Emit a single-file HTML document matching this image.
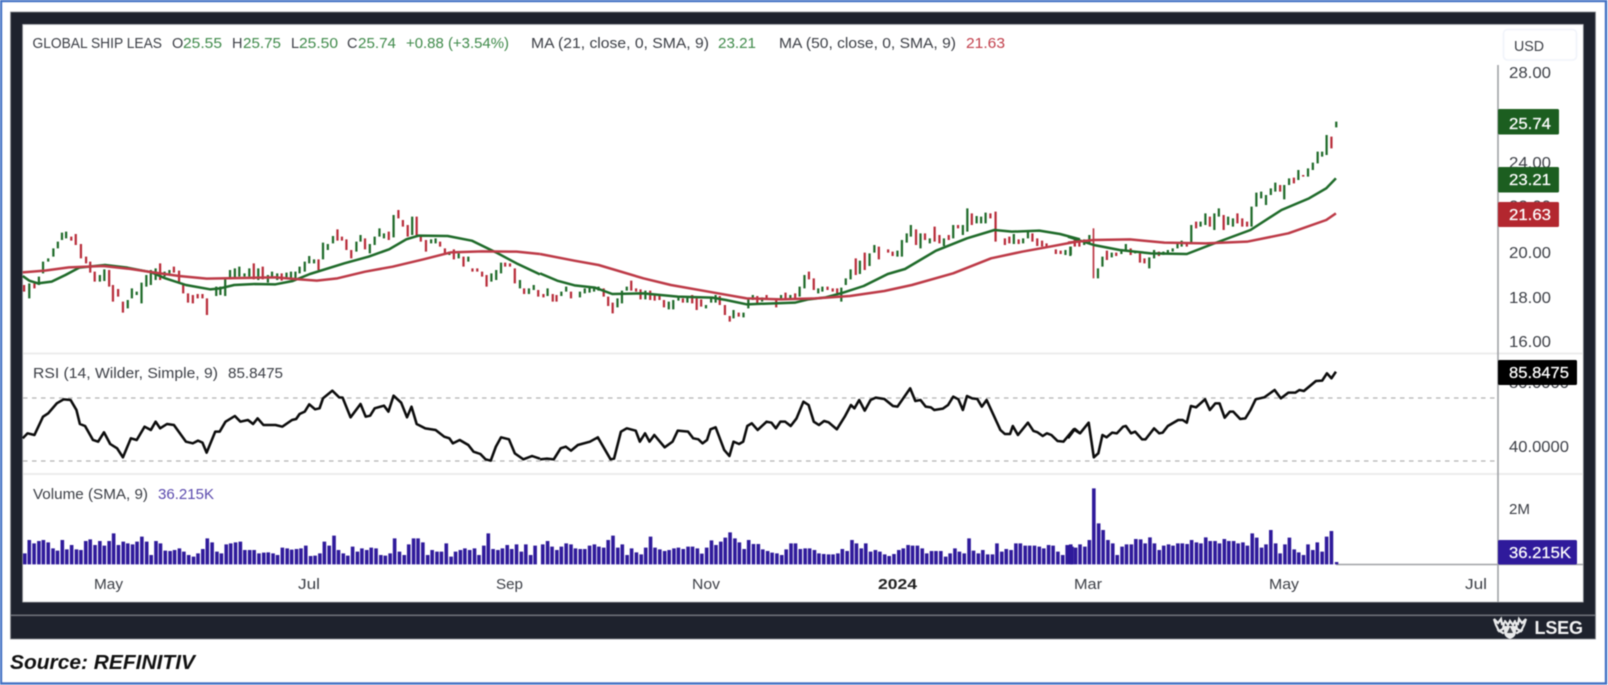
<!DOCTYPE html>
<html><head><meta charset="utf-8"><style>
html,body{margin:0;padding:0;background:#fff}
svg{display:block}
text{font-family:"Liberation Sans",sans-serif;fill:#3c3f46}
.g{fill:#3f8a4a}.r{fill:#c2404c}.w{fill:#fff;stroke:#fff;stroke-width:.25}
polyline{stroke-linejoin:round}
</style></head><body>
<svg width="1608" height="685" viewBox="0 0 1608 685" xmlns="http://www.w3.org/2000/svg" style="filter:blur(.4px)">
<rect x="1" y="1" width="1605" height="682.5" fill="#fff" stroke="#4472c4" stroke-width="2.4"/>
<rect x="10.5" y="12" width="1585" height="627" fill="#1e222d" stroke="#8a8d93" stroke-width=".8"/>
<rect x="22.7" y="24.5" width="1560.5" height="577.5" fill="#fff" stroke="#b5b7bb" stroke-width=".8"/>
<rect x="10.5" y="614.5" width="1585" height="1.6" fill="#6d7078"/>

<!-- separators -->
<rect x="23" y="352.5" width="1560" height="2" fill="#ececec"/>
<rect x="23" y="473" width="1560" height="2" fill="#ececec"/>
<path d="M23 398H1495M23 461H1495" stroke="#b4b4b4" stroke-width="1.2" stroke-dasharray="4.5 4.5" fill="none"/>
<path d="M1498 65V602" stroke="#a0a2a6" stroke-width="1.6"/>
<path d="M1336 564.5H1583" stroke="#a0a2a6" stroke-width="1.4"/>

<!-- USD -->
<rect x="1503.5" y="29.5" width="73" height="30.5" rx="4" fill="#fff" stroke="#f0f3fa" stroke-width="1.6"/>

<!-- candles zoom4 -->
<g transform="translate(0,220) scale(.34435,.33333)" fill="none" stroke-width="6.5">
<path stroke="#1f6b2a" d="M85 190V235M113 170V195M125 125V160M140 115V125M155 85V110M168 65V85M180 38V60M192 35V55M290 165V185M303 148V183M371 240V265M383 205V235M397 215V225M411 188V250M425 165V200M438 150V195M452 145V180M478 155V170M492 150V160M628 200V228M640 200V225M654 175V228M668 150V178M682 145V175M695 140V170M710 160V170M724 145V170M750 145V180M778 165V188M790 155V175M805 160V180M832 158V175M845 155V178M858 155V175M870 140V160M885 125V155M898 108V130M912 118V130M938 68V118M952 72V90M967 48V70M1035 65V95M1047 45V65M1074 72V100M1088 50V75M1102 25V50M1115 40V55M1143 -15V52M1197 -10V45M1252 58V70M1265 55V70M1305 95V105M1332 100V115M1360 110V125M1427 160V185M1441 150V180M1455 128V160M1510 180V205M1536 205V222M1550 195V210"/>
<path stroke="#b82c3a" d="M70 195V215M100 190V205M207 50V62M220 42V75M235 72V115M250 110V130M262 125V158M275 155V185M317 150V200M328 195V245M343 207V230M357 245V278M465 130V180M505 140V158M520 152V190M532 190V220M546 220V248M560 225V250M574 222V235M588 222V235M601 235V285M737 130V178M763 140V178M818 160V182M925 118V150M980 28V62M993 50V62M1006 58V90M1020 90V115M1060 55V88M1129 35V60M1157 -30V-5M1170 0V20M1184 15V50M1210 -10V50M1222 45V65M1237 60V95M1278 65V80M1292 85V100M1318 88V118M1346 110V140M1372 145V155M1386 145V155M1400 155V170M1413 165V200M1467 128V140M1481 130V140M1495 145V190M1522 205V222M1563 210V230"/>
<polyline fill="none" stroke="#1f6b2a" stroke-width="7.5" points="66,168 85,182 110,190 150,185 190,165 230,143 305,135 370,143 440,157 480,175 540,195 610,208 640,205 680,195 740,192 800,193 850,183 900,162 1000,130 1070,110 1130,88 1180,58 1215,47 1300,48 1370,62 1440,97 1500,130 1568,163"/>
<polyline fill="none" stroke="#bd3a47" stroke-width="7.5" points="66,157 130,152 200,142 300,138 380,147 450,158 520,168 600,176 700,174 800,172 870,178 920,182 980,175 1060,155 1140,140 1230,118 1310,97 1400,94 1500,95 1568,102"/>
<polyline fill="none" stroke="#0c0c0c" stroke-width="7.5" points="66,655 80,640 100,645 125,590 140,580 165,550 185,538 205,540 222,570 232,612 247,618 270,660 285,665 302,637 320,672 340,685 357,712 380,655 397,660 420,620 438,630 452,605 465,625 485,612 505,615 540,665 560,670 575,662 588,668 600,698 625,635 638,635 655,605 682,588 698,605 720,600 735,612 748,595 765,615 800,615 820,620 848,600 860,597 870,582 885,575 898,553 915,568 928,565 938,535 965,512 985,532 995,533 1018,592 1047,552 1062,590 1075,587 1088,565 1115,557 1128,575 1143,527 1165,548 1182,592 1195,560 1210,612 1235,625 1265,630 1290,650 1305,655 1315,670 1335,660 1360,675 1375,695 1395,702 1410,718 1425,722 1440,680 1455,652 1478,658 1495,700 1520,718 1545,708 1568,716"/>
</g>

<!-- candles zoom5 -->
<g transform="translate(540,220) scale(.34435,.33333)" fill="none" stroke-width="6.5">
<path stroke="#1f6b2a" d="M22 205V228M62 215V228M76 200V215M116 215V232M130 205V220M144 200V218M157 200V215M170 200V212M225 235V262M238 212V250M252 200V212M306 212V238M374 245V268M387 240V268M402 230V242M428 232V248M482 255V265M497 232V248M510 225V248M562 270V295M591 278V292M605 238V265M618 225V240M645 232V245M700 225V240M727 225V238M754 200V230M768 165V205M808 205V220M820 200V215M875 203V245M888 175V195M902 148V178M929 122V162M957 100V138M971 75V98M1038 92V110M1051 60V110M1065 40V68M1077 15V50M1105 40V85M1132 55V70M1173 55V78M1200 15V55M1228 15V45M1241 -35V35M1268 -12V10M1281 -10V10M1294 -22V10M1376 42V72M1403 55V70M1417 35V55M1526 90V105M1540 80V108"/>
<path stroke="#b82c3a" d="M10 222V232M37 222V245M48 225V245M90 215V235M185 205V230M198 230V258M211 248V280M265 182V212M279 205V215M292 208V238M320 212V240M333 225V242M347 228V240M360 240V262M415 235V248M442 225V250M455 235V270M468 238V260M522 228V255M537 255V285M551 288V305M577 278V290M631 228V255M658 225V238M686 240V262M713 218V240M741 220V235M781 155V178M795 175V210M835 200V210M850 205V215M863 205V220M917 115V165M943 98V150M984 80V118M1011 88V98M1024 95V108M1092 28V75M1118 40V60M1146 20V65M1160 45V70M1187 45V60M1214 15V25M1254 -20V15M1308 -20V-5M1323 -25V65M1350 55V75M1363 50V70M1390 58V72M1430 40V65M1444 55V78M1458 62V80M1471 70V82M1498 88V102M1512 92V102M1553 60V80"/>
<polyline fill="none" stroke="#1f6b2a" stroke-width="7.5" points="0,160 50,182 100,196 160,203 210,222 300,220 400,230 500,233 540,240 600,253 680,250 740,248 780,238 830,232 880,218 940,198 1010,162 1060,147 1150,92 1240,55 1320,30 1370,35 1450,32 1510,42 1568,58"/>
<polyline fill="none" stroke="#bd3a47" stroke-width="7.5" points="0,102 100,122 170,135 300,175 380,195 500,217 600,235 700,238 800,235 900,228 1000,213 1080,195 1200,160 1310,115 1400,95 1480,80 1568,63"/>
<polyline fill="none" stroke="#0c0c0c" stroke-width="7.5" points="0,718 20,716 40,718 60,685 75,680 90,692 110,675 145,665 168,652 205,718 215,716 235,635 252,625 278,632 290,665 305,640 318,665 332,645 362,682 385,665 400,632 430,635 445,655 460,658 472,670 485,660 495,628 510,622 535,690 550,708 562,665 578,672 590,665 602,618 615,610 632,630 658,605 672,608 685,625 698,605 712,605 728,618 745,595 765,545 780,555 795,605 810,615 825,603 838,607 862,628 885,590 903,555 913,565 927,540 943,572 960,540 975,533 1000,537 1025,558 1038,560 1075,505 1090,543 1105,540 1120,560 1135,562 1145,570 1170,566 1185,555 1200,530 1215,538 1228,570 1240,528 1255,535 1270,537 1283,560 1297,540 1337,630 1350,642 1365,642 1373,618 1388,645 1417,608 1433,633 1445,637 1460,648 1472,640 1485,645 1503,663 1520,665 1550,628 1568,640"/>
</g>

<!-- candles zoom6 -->
<g transform="translate(1068,220) scale(.34435,.33333)" fill="none" stroke-width="6.5">
<path stroke="#1f6b2a" d="M8 80V105M47 58V75M62 45V70M87 145V175M100 110V140M127 98V112M155 88V102M168 72V90M195 95V100M236 112V145M250 90V115M277 95V105M290 90V100M304 85V95M318 72V85M330 62V80M358 15V70M385 5V20M399 -20V15M425 -20V30M438 -35V-10M465 -10V15M479 -5V20M533 -40V20M547 -82V-40M561 -85V-65M575 -75V-45M589 -95V-75M602 -112V-85M628 -105V-62M642 -125V-105M669 -150V-120M697 -155V-130M711 -172V-150M725 -205V-170M738 -205V-190M751 -255V-195M779 -295V-278"/>
<path stroke="#b82c3a" d="M20 60V78M33 65V80M113 92V120M140 98V108M182 85V105M209 100V128M222 115V130M264 95V108M345 68V80M372 5V25M412 -10V20M452 -15V30M492 -20V10M506 -5V20M520 5V20M616 -105V-85M656 -127V-110M683 -135V-130M765 -250V-215"/>
<path stroke="#bd3a47" stroke-width="5" d="M74 25V175"/>
<polyline fill="none" stroke="#1f6b2a" stroke-width="7.5" points="0,50 75,75 150,90 240,100 345,102 420,72 530,30 620,-30 700,-65 750,-95 778,-125"/>
<polyline fill="none" stroke="#bd3a47" stroke-width="7.5" points="0,68 75,60 180,58 280,68 400,70 520,65 640,40 750,0 778,-20"/>
<polyline fill="none" stroke="#0c0c0c" stroke-width="7.5" points="0,655 20,627 35,640 60,608 75,712 88,700 100,645 112,652 128,638 142,640 160,620 168,618 183,640 195,635 215,658 225,658 250,625 265,640 275,638 290,618 320,600 333,600 345,608 357,558 372,562 398,538 412,570 428,550 440,550 455,593 470,575 480,575 500,597 515,595 530,570 545,538 570,532 600,510 618,535 640,518 660,518 672,510 685,513 720,483 738,482 752,460 765,475 778,455"/>
</g>

<!-- volume -->
<g fill="none" stroke="#2f1a9b" stroke-width="10.5">
<path transform="translate(0,455) scale(.34435,.33333)" d="M72 328V295M85 328V255M99 328V265M113 328V258M126 328V255M140 328V262M154 328V280M167 328V287M181 328V255M194 328V283M208 328V270M222 328V283M235 328V285M249 328V258M262 328V253M276 328V270M290 328V258M303 328V272M317 328V258M330 328V235M344 328V270M358 328V260M371 328V265M385 328V268M398 328V260M412 328V245M426 328V260M439 328V300M453 328V258M466 328V265M480 328V287M494 328V288M507 328V285M521 328V280M534 328V290M548 328V300M562 328V305M575 328V295M589 328V282M602 328V250M616 328V262M630 328V290M643 328V295M657 328V268M670 328V265M684 328V262M698 328V260M711 328V285M725 328V285M738 328V285M752 328V295M766 328V293M779 328V292M793 328V295M806 328V300M820 328V278M834 328V280M847 328V284M861 328V282M874 328V280M888 328V272M902 328V303M915 328V302M929 328V295M942 328V260M956 328V272M970 328V242M983 328V285M997 328V295M1010 328V302M1024 328V275M1038 328V290M1051 328V280M1065 328V285M1078 328V278M1092 328V280M1106 328V300M1119 328V302M1133 328V295M1146 328V250M1160 328V290M1174 328V300M1187 328V268M1201 328V250M1214 328V250M1228 328V262M1242 328V300M1255 328V285M1269 328V290M1282 328V290M1296 328V265M1310 328V305M1323 328V290M1337 328V285M1350 328V280M1364 328V285M1378 328V280M1391 328V300M1405 328V272M1418 328V235M1432 328V282M1446 328V285M1459 328V280M1473 328V270M1486 328V282M1500 328V268M1514 328V290M1527 328V268M1541 328V300M1554 328V272"/>
<path transform="translate(540,455) scale(.34435,.33333)" d="M8 328V268M22 328V258M35 328V275M49 328V285M62 328V275M76 328V265M90 328V268M103 328V280M117 328V282M130 328V282M144 328V272M158 328V268M171 328V275M185 328V278M198 328V255M212 328V242M226 328V278M239 328V268M253 328V300M266 328V280M280 328V292M294 328V298M307 328V278M321 328V245M334 328V278M348 328V283M362 328V288M375 328V285M389 328V280M402 328V278M416 328V282M430 328V275M443 328V275M457 328V280M470 328V296M484 328V278M498 328V256M511 328V270M525 328V260M538 328V248M552 328V232M566 328V250M579 328V262M593 328V282M606 328V255M620 328V267M634 328V267M647 328V283M661 328V288M674 328V293M688 328V295M702 328V300M715 328V283M729 328V265M742 328V265M756 328V282M770 328V280M783 328V280M797 328V285M810 328V295M824 328V297M838 328V298M851 328V298M865 328V295M878 328V282M892 328V288M906 328V255M919 328V265M933 328V280M946 328V265M960 328V290M974 328V285M987 328V290M1001 328V298M1014 328V303M1028 328V297M1042 328V285M1055 328V280M1069 328V270M1082 328V272M1096 328V272M1110 328V280M1123 328V295M1137 328V288M1150 328V288M1164 328V288M1178 328V305M1191 328V295M1205 328V280M1218 328V290M1232 328V295M1246 328V250M1259 328V287M1273 328V295M1286 328V285M1300 328V298M1314 328V298M1327 328V265M1341 328V290M1354 328V282M1368 328V285M1382 328V265M1395 328V265M1409 328V272M1422 328V272M1436 328V272M1450 328V275M1463 328V280M1477 328V270M1490 328V272M1504 328V290M1518 328V300M1531 328V270M1545 328V275"/>
<path transform="translate(1068,455) scale(.34435,.33333)" d="M8 328V268M22 328V278M35 328V268M49 328V275M62 328V255M75 328V100M89 328V205M102 328V225M116 328V255M130 328V265M143 328V300M157 328V275M170 328V268M184 328V268M197 328V252M211 328V253M224 328V265M238 328V247M251 328V265M265 328V285M278 328V272M292 328V268M305 328V272M319 328V265M332 328V265M346 328V267M359 328V255M373 328V262M386 328V265M400 328V247M413 328V258M427 328V258M440 328V265M454 328V252M467 328V258M481 328V258M494 328V265M508 328V262M521 328V272M535 328V235M548 328V248M562 328V278M575 328V268M589 328V225M603 328V265M616 328V295M630 328V268M643 328V248M657 328V283M670 328V292M684 328V300M697 328V268M711 328V285M724 328V262M738 328V290M751 328V245M765 328V228"/>
<path transform="translate(1068,455) scale(.34435,.33333)" stroke-width="10" d="M780 328V321"/>
</g>

<!-- legend -->
<g font-size="14.5">
<text x="32.5" y="48" textLength="129.5" lengthAdjust="spacingAndGlyphs">GLOBAL SHIP LEAS</text>
<text x="172" y="48">O</text><text class="g" x="183" y="48" textLength="39" lengthAdjust="spacingAndGlyphs">25.55</text>
<text x="232" y="48">H</text><text class="g" x="243" y="48" textLength="38" lengthAdjust="spacingAndGlyphs">25.75</text>
<text x="291" y="48">L</text><text class="g" x="299" y="48" textLength="39" lengthAdjust="spacingAndGlyphs">25.50</text>
<text x="347" y="48">C</text><text class="g" x="358" y="48" textLength="38" lengthAdjust="spacingAndGlyphs">25.74</text>
<text class="g" x="406" y="48" textLength="103" lengthAdjust="spacingAndGlyphs">+0.88 (+3.54%)</text>
<text x="531" y="48" textLength="178" lengthAdjust="spacingAndGlyphs">MA (21, close, 0, SMA, 9)</text>
<text class="g" x="718" y="48" textLength="38" lengthAdjust="spacingAndGlyphs">23.21</text>
<text x="779" y="48" textLength="177" lengthAdjust="spacingAndGlyphs">MA (50, close, 0, SMA, 9)</text>
<text class="r" x="966" y="48" textLength="39" lengthAdjust="spacingAndGlyphs">21.63</text>
<text x="33" y="378" textLength="185" lengthAdjust="spacingAndGlyphs">RSI (14, Wilder, Simple, 9)</text>
<text x="228" y="378" textLength="55" lengthAdjust="spacingAndGlyphs">85.8475</text>
<text x="33" y="499" textLength="115" lengthAdjust="spacingAndGlyphs">Volume (SMA, 9)</text>
<text x="158" y="499" textLength="56" style="fill:#5a49ad" lengthAdjust="spacingAndGlyphs">36.215K</text>
</g>

<!-- axes text -->
<g font-size="16">
<text x="1514" y="51" textLength="30" lengthAdjust="spacingAndGlyphs" font-size="15">USD</text>
<text x="1509" y="78" textLength="42" lengthAdjust="spacingAndGlyphs">28.00</text>
<text x="1509" y="168" textLength="42" lengthAdjust="spacingAndGlyphs">24.00</text>
<text x="1509" y="211.5" textLength="42" lengthAdjust="spacingAndGlyphs">22.00</text>
<text x="1509" y="258" textLength="42" lengthAdjust="spacingAndGlyphs">20.00</text>
<text x="1509" y="303" textLength="42" lengthAdjust="spacingAndGlyphs">18.00</text>
<text x="1509" y="347" textLength="42" lengthAdjust="spacingAndGlyphs">16.00</text>
<text x="1509" y="388" textLength="60" lengthAdjust="spacingAndGlyphs">80.0000</text>
<text x="1509" y="452" textLength="60" lengthAdjust="spacingAndGlyphs">40.0000</text>
<text x="1509" y="514" textLength="21" lengthAdjust="spacingAndGlyphs" font-size="15">2M</text>
</g>
<rect x="1498" y="109" width="61" height="25.5" rx="1.5" fill="#1c5e20"/>
<rect x="1498" y="167" width="61" height="25.5" rx="1.5" fill="#1c5e20"/>
<rect x="1498" y="202" width="61" height="25" rx="1.5" fill="#b3272f"/>
<rect x="1498" y="360" width="79" height="25" rx="1.5" fill="#000"/>
<rect x="1498" y="540" width="79" height="24.5" rx="1.5" fill="#2f1a9b"/>
<g font-size="16" style="font-weight:normal">
<text class="w" x="1509" y="129" textLength="42" lengthAdjust="spacingAndGlyphs">25.74</text>
<text class="w" x="1509" y="185" textLength="42" lengthAdjust="spacingAndGlyphs">23.21</text>
<text class="w" x="1509" y="220" textLength="42" lengthAdjust="spacingAndGlyphs">21.63</text>
<text class="w" x="1509" y="378" textLength="60" lengthAdjust="spacingAndGlyphs">85.8475</text>
<text class="w" x="1509" y="558" textLength="62" lengthAdjust="spacingAndGlyphs">36.215K</text>
</g>
<g font-size="15">
<text x="94" y="589" textLength="29" lengthAdjust="spacingAndGlyphs">May</text>
<text x="298" y="589" textLength="22" lengthAdjust="spacingAndGlyphs">Jul</text>
<text x="496" y="589" textLength="27" lengthAdjust="spacingAndGlyphs">Sep</text>
<text x="692" y="589" textLength="28" lengthAdjust="spacingAndGlyphs">Nov</text>
<text x="878" y="589" textLength="39" lengthAdjust="spacingAndGlyphs" font-weight="bold" style="fill:#222">2024</text>
<text x="1074" y="589" textLength="28" lengthAdjust="spacingAndGlyphs">Mar</text>
<text x="1269" y="589" textLength="30" lengthAdjust="spacingAndGlyphs">May</text>
<text x="1465" y="589" textLength="22" lengthAdjust="spacingAndGlyphs">Jul</text>
</g>

<!-- LSEG crest -->
<g fill="none" stroke="#e9eaeb" stroke-width="2.2" stroke-linecap="round">
<path d="M1494 619l4 4 3-4 1 5 2-1-1 6-4 2-3-6zM1526 619l-4 4-3-4-1 5-2-1 1 6 4 2 3-6z"/>
<path d="M1505 621l3 4 2-4 3 4 2-4M1498 630l5 3M1522 630l-5 3"/>
</g>
<path d="M1504 626h12v6q0 5-6 7-6-2-6-7z" fill="#e9eaeb"/>
<path d="M1510 627l-3 6h6z" fill="#3a3d44"/>
<text x="1534.5" y="634" font-size="18" font-weight="bold" textLength="48.5" lengthAdjust="spacing" style="fill:#f2f2f3">LSEG</text>

<text x="10" y="669" font-size="20.5" font-weight="bold" font-style="italic" style="fill:#111" textLength="185" lengthAdjust="spacingAndGlyphs">Source: REFINITIV</text>
</svg>
</body></html>
